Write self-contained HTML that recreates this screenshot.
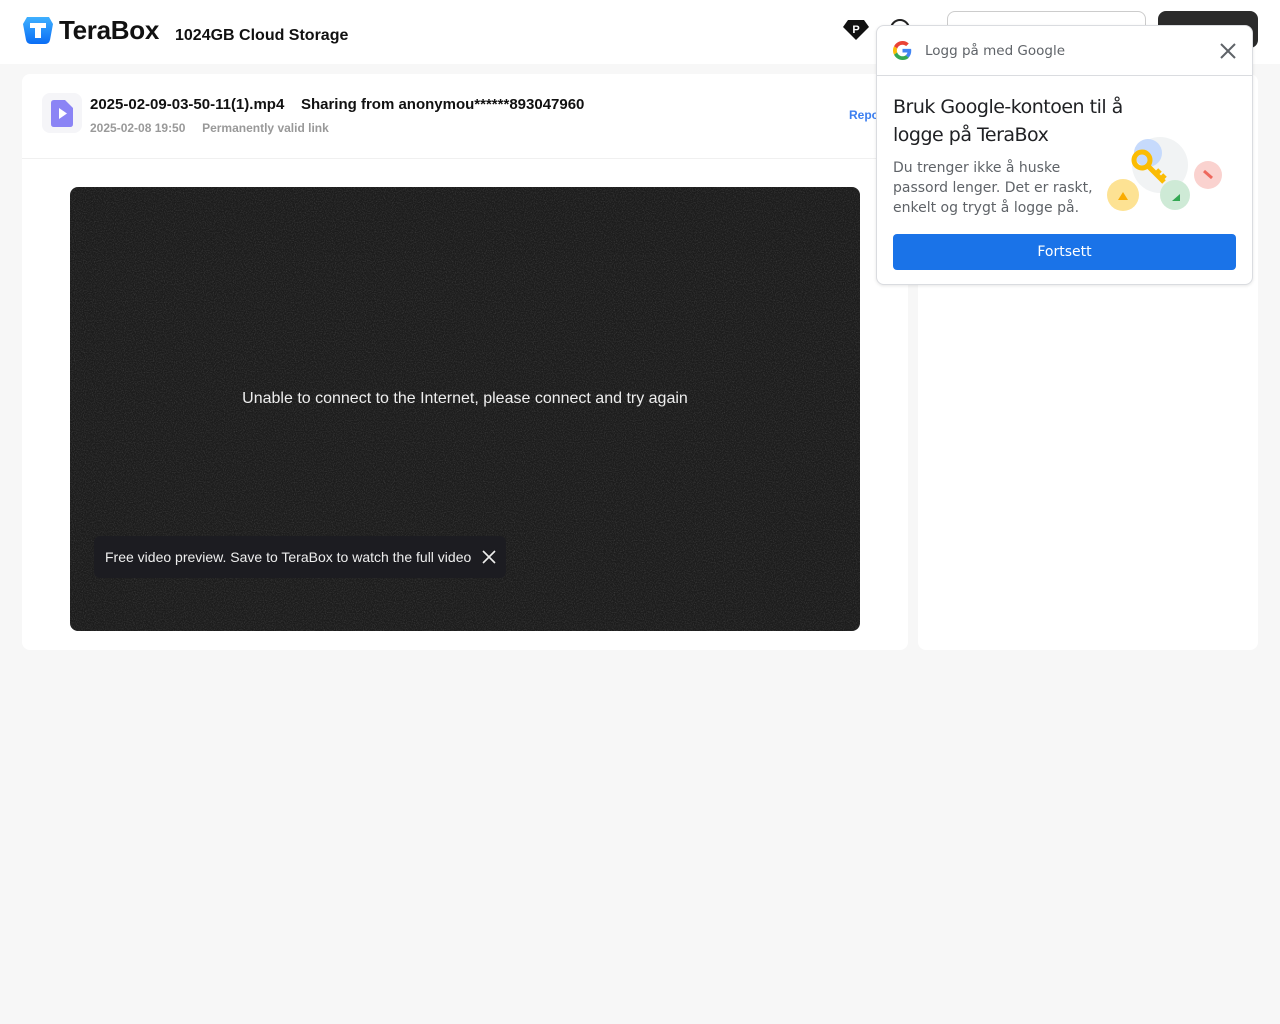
<!DOCTYPE html>
<html><head><meta charset="utf-8"><style>
*{box-sizing:border-box;margin:0;padding:0}
body{width:1280px;height:1024px;background:#f7f7f7;font-family:"Liberation Sans",sans-serif;position:relative;overflow:hidden}
.hdr{position:absolute;left:0;top:0;width:1280px;height:64px;background:#fff}
.abs{position:absolute}
</style></head><body>
<div class="hdr"></div>
<svg class="abs" style="left:22px;top:16px" width="32" height="28" viewBox="0 0 32 28"><defs><linearGradient id="g" x1="0" y1="0" x2="0" y2="1"><stop offset="0" stop-color="#3fb0ff"/><stop offset="1" stop-color="#0a6df5"/></linearGradient></defs><path d="M5 1h22l4 7-3 16q-1 4-5 4H9q-4 0-5-4L1 8z" fill="url(#g)"/><path d="M8 7h16v5h-5v10h-6V12H8z" fill="#fff"/></svg>
<div class="abs" style="left:59px;top:15px;font-size:26px;font-weight:bold;color:#111;letter-spacing:-0.3px">TeraBox</div>
<div class="abs" style="left:175px;top:27px;font-size:16px;font-weight:bold;color:#111">1024GB Cloud Storage</div>
<svg class="abs" style="left:842px;top:19px" width="28" height="22" viewBox="0 0 28 22"><path d="M6 1h16l5 7-13 13L1 8z" fill="#111"/><text x="14" y="14" font-size="11" font-weight="bold" fill="#fff" text-anchor="middle" font-family="Liberation Sans">P</text></svg>
<div class="abs" style="left:890px;top:19px;width:20px;height:20px;border:2px solid #222;border-radius:50%"></div>
<div class="abs" style="left:947px;top:11px;width:199px;height:37px;border:1px solid #ccc;border-radius:8px;background:#fff"></div>
<div class="abs" style="left:1158px;top:11px;width:100px;height:37px;background:#2b2b2b;border-radius:8px"></div>

<div class="abs" style="left:22px;top:74px;width:886px;height:576px;background:#fff;border-radius:8px"></div>
<div class="abs" style="left:918px;top:74px;width:340px;height:576px;background:#fff;border-radius:8px"></div>
<div class="abs" style="left:22px;top:158px;width:886px;height:1px;background:#f0f0f0"></div>
<div class="abs" style="left:42px;top:93px;width:40px;height:40px;background:#f5f5f8;border-radius:8px"></div>
<svg class="abs" style="left:51px;top:100px" width="22" height="27" viewBox="0 0 22 27"><path d="M3 0h11l8 8v16q0 3-3 3H3q-3 0-3-3V3q0-3 3-3z" fill="#8b84f5"/><path d="M8 8l8 5.5-8 5.5z" fill="#fff"/></svg>
<div class="abs" style="left:90px;top:96px;font-size:15px;font-weight:bold;color:#111">2025-02-09-03-50-11(1).mp4&nbsp;&nbsp;&nbsp;&nbsp;Sharing from anonymou******893047960</div>
<div class="abs" style="left:90px;top:121px;font-size:12px;font-weight:bold;color:#999">2025-02-08 19:50&nbsp;&nbsp;&nbsp;&nbsp;&nbsp;Permanently valid link</div>
<div class="abs" style="left:849px;top:108px;font-size:12px;font-weight:bold;color:#3c7ff0">Report</div>

<svg class="abs" style="left:70px;top:187px" width="790" height="444"><defs><filter id="n"><feTurbulence type="fractalNoise" baseFrequency="0.9" numOctaves="2" seed="3"/><feColorMatrix values="0 0 0 0 0.5  0 0 0 0 0.5  0 0 0 0 0.5  0 0 0 1.2 -0.5"/></filter><clipPath id="c"><rect width="790" height="444" rx="8"/></clipPath></defs><g clip-path="url(#c)"><rect width="790" height="444" fill="#1c1c1c"/><rect width="790" height="444" filter="url(#n)" opacity="0.35"/></g></svg>
<div class="abs" style="left:70px;top:390px;width:790px;text-align:center;font-size:16px;color:#eee">Unable to connect to the Internet, please connect and try again</div>
<div class="abs" style="left:94px;top:536px;width:412px;height:42px;background:#1c1c21;border-radius:6px"></div>
<div class="abs" style="left:105px;top:549px;font-size:14px;color:#eee">Free video preview. Save to TeraBox to watch the full video</div>
<svg class="abs" style="left:482px;top:550px" width="14" height="14"><path d="M1 1L13 13M13 1L1 13" stroke="#eee" stroke-width="1.6"/></svg>

<div class="abs" style="left:876px;top:25px;width:377px;height:260px;background:#fff;border:1px solid #dadce0;border-radius:8px;box-shadow:0 1px 3px rgba(0,0,0,.1)"></div>
<div class="abs" style="left:877px;top:75px;width:375px;height:1px;background:#dadce0"></div>
<svg class="abs" style="left:893px;top:41px" width="19" height="19" viewBox="0 0 48 48"><path fill="#EA4335" d="M24 9.5c3.5 0 6.6 1.2 9.1 3.6l6.8-6.8C35.8 2.5 30.3 0 24 0 14.6 0 6.6 5.4 2.7 13.3l7.9 6.1C12.5 13.6 17.8 9.5 24 9.5z"/><path fill="#4285F4" d="M46.1 24.5c0-1.6-.1-3.1-.4-4.5H24v9h12.4c-.5 2.9-2.2 5.3-4.7 7l7.6 5.9c4.4-4.1 6.8-10.1 6.8-17.4z"/><path fill="#FBBC05" d="M10.5 28.6c-.5-1.4-.8-3-.8-4.6s.3-3.2.8-4.6l-7.9-6.1C1 16.5 0 20.1 0 24s1 7.5 2.7 10.7l7.8-6.1z"/><path fill="#34A853" d="M24 48c6.5 0 11.9-2.1 15.9-5.8l-7.6-5.9c-2.1 1.4-4.9 2.3-8.3 2.3-6.2 0-11.5-4.2-13.4-9.9l-7.9 6.1C6.6 42.6 14.6 48 24 48z"/></svg>
<div class="abs" style="left:925px;top:43px;color:#5f6368;font-family:'DejaVu Sans',sans-serif;font-size:13.5px">Logg på med Google</div>
<svg class="abs" style="left:1220px;top:43px" width="16" height="16"><path d="M1 1L15 15M15 1L1 15" stroke="#5f6368" stroke-width="2"/></svg>
<div class="abs" style="left:893px;top:93px;font-size:19px;line-height:28px;color:#202124;font-family:'DejaVu Sans',sans-serif;letter-spacing:-0.5px">Bruk Google-kontoen til å<br>logge på TeraBox</div>
<div class="abs" style="left:893px;top:158px;font-size:14px;line-height:20px;color:#5f6368;font-family:'DejaVu Sans',sans-serif;letter-spacing:0px">Du trenger ikke å huske<br>passord lenger. Det er raskt,<br>enkelt og trygt å logge på.</div>
<svg class="abs" style="left:1100px;top:135px" width="130" height="80">
<circle cx="60" cy="30" r="28" fill="#f1f3f4"/>
<circle cx="48" cy="18" r="14" fill="#c6dafc"/>
<circle cx="23" cy="60" r="16" fill="#fde293"/><path d="M18 65l5-8 5 8z" fill="#f9ab00"/>
<circle cx="75" cy="60" r="15" fill="#ceead6"/><path d="M72 66h8v-7z" fill="#34a853"/>
<circle cx="108" cy="40" r="14" fill="#fad2cf"/><path d="M104 36l8 7" stroke="#ee675c" stroke-width="3"/>
<circle cx="42" cy="25" r="8" fill="none" stroke="#fbbc04" stroke-width="5"/>
<path d="M48 31l16 16M56 39l4-4M61 44l4-4" stroke="#fbbc04" stroke-width="5"/>
</svg>
<div class="abs" style="left:893px;top:234px;width:343px;height:36px;background:#1a73e8;border-radius:4px;color:#fff;text-align:center;line-height:36px;font-size:14px;font-family:'DejaVu Sans',sans-serif">Fortsett</div>
</body></html>
